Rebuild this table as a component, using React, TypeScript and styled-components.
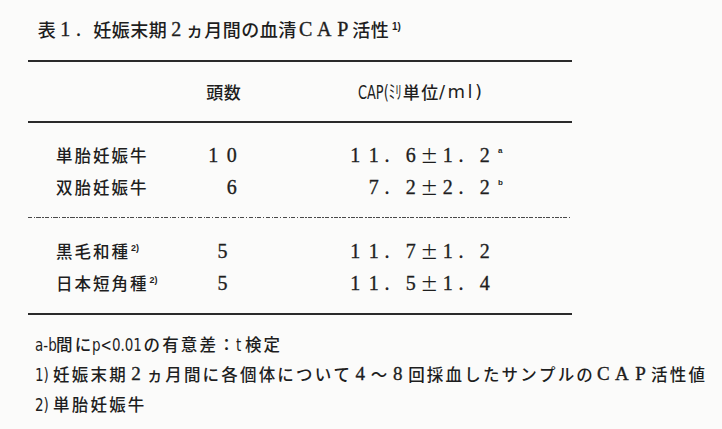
import React from "react";
import styled, { createGlobalStyle } from "styled-components";

const Global = createGlobalStyle`
  html, body { margin: 0; padding: 0; background: #fbfbfa; }
  body {
    font-family: "Noto Sans CJK JP", sans-serif;
    color: #1e1e1e;
  }
`;

const Page = styled.main`
  width: 722px;
  height: 429px;
  overflow: hidden;
  box-sizing: border-box;
  padding-top: 17px;
  display: flex;
  flex-direction: column;
`;

const Line = styled.div<{ $h: number; $pad: number }>`
  display: flex;
  align-items: center;
  height: ${(p) => p.$h}px;
  padding-left: ${(p) => p.$pad}px;
  white-space: nowrap;
`;

type Kind = "cjk" | "serif" | "sym" | "dot";

const kindOf = (c: string): Kind => {
  if (c === ".") return "dot";
  if (c === "±") return "sym";
  if (/[0-9A-Za-z]/.test(c)) return "serif";
  return "cjk";
};

const Cell = styled.span<{ $w: number; $kind: Kind; $size: number; $dsize: number }>`
  display: inline-block;
  flex: none;
  box-sizing: border-box;
  width: ${(p) => p.$w}px;
  line-height: 24px;
  text-align: ${(p) => (p.$kind === "dot" ? "left" : "center")};
  padding-left: ${(p) => (p.$kind === "dot" ? 1.5 : 0)}px;
  font-family: ${(p) =>
    p.$kind === "serif" || p.$kind === "dot"
      ? '"Liberation Serif", serif'
      : '"Noto Sans CJK JP", sans-serif'};
  font-weight: ${(p) => (p.$kind === "cjk" ? 500 : 400)};
  -webkit-text-stroke: ${(p) => (p.$kind === "serif" || p.$kind === "dot" ? "0.35px #1e1e1e" : "0")};
  font-size: ${(p) =>
    p.$kind === "serif" || p.$kind === "dot" ? p.$dsize : p.$kind === "sym" ? p.$size + 1 : p.$size}px;
`;

function Typed({
  text,
  w = 18.5,
  size = 17,
  dsize = 20,
}: {
  text: string;
  w?: number;
  size?: number;
  dsize?: number;
}) {
  return (
    <>
      {Array.from(text).map((c, i) => (
        <Cell key={i} $w={w} $kind={kindOf(c)} $size={size} $dsize={dsize}>
          {c === " " ? "\u00a0" : c}
        </Cell>
      ))}
    </>
  );
}

const NarrowBox = styled.span<{ $w: number }>`
  display: inline-block;
  flex: none;
  width: ${(p) => p.$w}px;
  white-space: nowrap;
  overflow: visible;
  line-height: 24px;
`;

const NarrowInk = styled.span<{ $sx: number; $size: number }>`
  display: inline-block;
  font-family: "DejaVu Sans", "Noto Sans CJK JP", sans-serif;
  font-size: ${(p) => p.$size}px;
  transform: scaleX(${(p) => p.$sx});
  transform-origin: left center;
`;

function Narrow({ text, w, sx = 0.75, size = 18 }: { text: string; w: number; sx?: number; size?: number }) {
  return (
    <NarrowBox $w={w}>
      <NarrowInk $sx={sx} $size={size}>
        {text}
      </NarrowInk>
    </NarrowBox>
  );
}

const Latin = styled.span`
  flex: none;
  font-family: "DejaVu Sans", sans-serif;
  font-size: 18px;
  letter-spacing: 2.5px;
  line-height: 24px;
`;

const Sup = styled.span<{ $lift: number; $gap: number; $size?: number }>`
  flex: none;
  font-family: "Liberation Sans", sans-serif;
  font-weight: 700;
  font-size: ${(p) => p.$size ?? 10}px;
  line-height: 10px;
  margin-left: ${(p) => p.$gap}px;
  margin-bottom: ${(p) => p.$lift * 2}px;
`;

const Table = styled.section`
  margin: 19px 0 0 28px;
  width: 544px;
  display: flex;
  flex-direction: column;
`;

const Rule = styled.div<{ $top?: number }>`
  height: 2px;
  margin-top: ${(p) => p.$top ?? 0}px;
  background: #2a2a2a;
`;

const Grid = styled.div<{ $h: number }>`
  display: grid;
  grid-template-columns: 149px 142px 1fr;
  padding-left: 27px;
  height: ${(p) => p.$h}px;
  align-items: center;
`;

const Slot = styled.div<{ $indent?: number }>`
  display: flex;
  align-items: center;
  padding-left: ${(p) => p.$indent ?? 0}px;
`;

const Body = styled.div`
  padding-top: 16px;
  display: flex;
  flex-direction: column;
`;

const Dotted = styled.div`
  height: 1.5px;
  margin: 13.5px 2px 17px 0;
  background: repeating-linear-gradient(
    to right,
    #4a4a4a 0 4px,
    transparent 4px 5.5px,
    #4a4a4a 5.5px 7px,
    transparent 7px 8.5px
  );
`;

const Notes = styled.section`
  margin-top: 14px;
  display: flex;
  flex-direction: column;
`;

type RowData = {
  label: string;
  sup?: string;
  count: string;
  countIndent: number;
  value: string;
  mark?: string;
};

const upper: RowData[] = [
  { label: "単胎妊娠牛", count: "10", countIndent: 0, value: "11.6±1.2", mark: "a" },
  { label: "双胎妊娠牛", count: " 6", countIndent: 0, value: " 7.2±2.2", mark: "b" },
];

const lower: RowData[] = [
  { label: "黒毛和種", sup: "2)", count: "5", countIndent: 9.25, value: "11.7±1.2" },
  { label: "日本短角種", sup: "2)", count: "5", countIndent: 9.25, value: "11.5±1.4" },
];

function DataRow({ r }: { r: RowData }) {
  return (
    <Grid $h={32}>
      <Slot>
        <Typed text={r.label} size={16.5} />
        {r.sup && (
          <Sup $lift={3} $gap={2} $size={9}>
            {r.sup}
          </Sup>
        )}
      </Slot>
      <Slot $indent={r.countIndent}>
        <Typed text={r.count} />
      </Slot>
      <Slot>
        <Typed text={r.value} />
        {r.mark && (
          <Sup $lift={4} $gap={4} $size={8}>
            {r.mark}
          </Sup>
        )}
      </Slot>
    </Grid>
  );
}

const FW = 18.7;

export default function App() {
  return (
    <>
      <Global />
      <Page>
        <Line $h={24} $pad={37.5}>
          <Typed text="表1.妊娠末期2ヵ月間の血清CAP活性" size={18} />
          <Sup $lift={2} $gap={3}>
            1)
          </Sup>
        </Line>

        <Table>
          <Rule />
          <Grid $h={59}>
            <span />
            <Slot $indent={2}>
              <Typed text="頭数" w={17.5} size={17} />
            </Slot>
            <Slot $indent={12}>
              <Narrow text="CAP(ﾐﾘ" w={44} sx={0.68} size={19} />
              <Typed text="単位" size={17} />
              <Latin>/ml)</Latin>
            </Slot>
          </Grid>
          <Rule />
          <Body>
            {upper.map((r) => (
              <DataRow key={r.label} r={r} />
            ))}
            <Dotted />
            {lower.map((r) => (
              <DataRow key={r.label} r={r} />
            ))}
          </Body>
          <Rule $top={14} />
        </Table>

        <Notes>
          <Line $h={30} $pad={35}>
            <Narrow text="a-b" w={20} />
            <Typed text="間に" w={FW} size={16.5} dsize={19} />
            <Narrow text="p<0.01" w={50} />
            <Typed text="の有意差：" w={FW} size={16.5} dsize={19} />
            <Narrow text="t" w={8} />
            <Typed text="検定" w={FW} size={16.5} dsize={19} />
          </Line>
          <Line $h={30} $pad={35}>
            <Narrow text="1)" w={17} />
            <Typed
              text="妊娠末期2ヵ月間に各個体について4～8回採血したサンプルのCAP活性値"
              w={FW}
              size={16.5}
              dsize={19}
            />
          </Line>
          <Line $h={30} $pad={35}>
            <Narrow text="2)" w={17} />
            <Typed text="単胎妊娠牛" w={FW} size={16.5} dsize={19} />
          </Line>
        </Notes>
      </Page>
    </>
  );
}
